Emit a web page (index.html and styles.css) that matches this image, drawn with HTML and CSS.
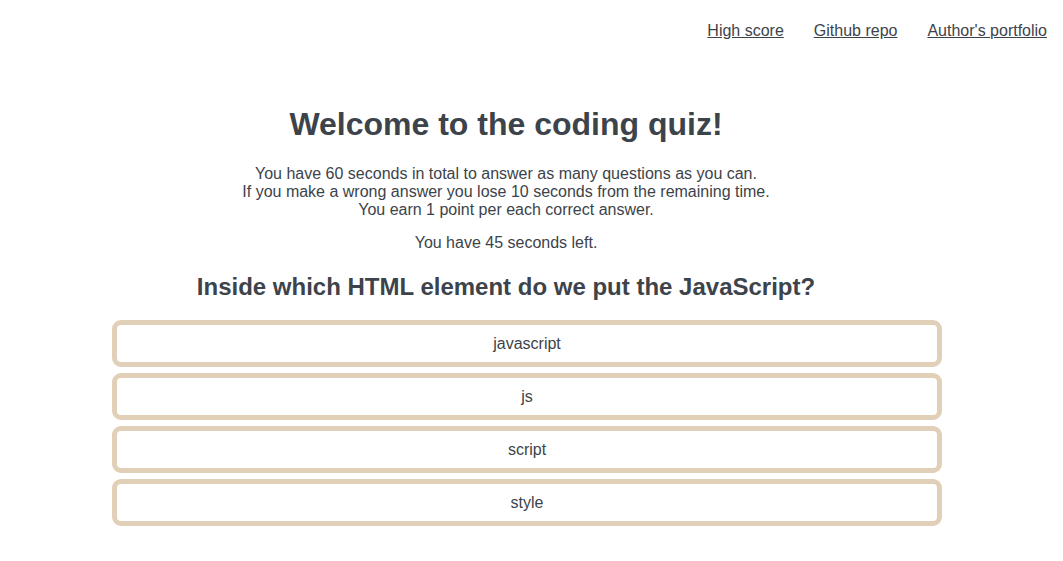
FILE: index.html
```html
<!DOCTYPE html>
<html lang="en">
<head>
<meta charset="utf-8">
<title>Coding quiz</title>
<link rel="stylesheet" href="styles.css">
</head>
<body>
<header class="top-nav">
  <a href="#" class="nav-link">High score</a>
  <a href="#" class="nav-link">Github repo</a>
  <a href="#" class="nav-link">Author's portfolio</a>
</header>
<main class="quiz">
  <section class="intro">
    <h1 class="title">Welcome to the coding quiz!</h1>
    <p class="rules">You have 60 seconds in total to answer as many questions as you can.<br>If you make a wrong answer you lose 10 seconds from the remaining time.<br>You earn 1 point per each correct answer.</p>
    <p class="timer">You have 45 seconds left.</p>
    <h2 class="question">Inside which HTML element do we put the JavaScript?</h2>
  </section>
  <div class="answers">
    <button class="answer">javascript</button>
    <button class="answer">js</button>
    <button class="answer">script</button>
    <button class="answer">style</button>
  </div>
</main>
</body>
</html>
```

FILE: styles.css
```css
html, body {
  margin: 0;
  padding: 0;
  background: #ffffff;
}
body {
  font-family: "Liberation Sans", Arial, sans-serif;
  color: #3d434a;
  font-size: 16px;
}
.top-nav {
  display: flex;
  justify-content: flex-end;
  gap: 30px;
  padding: 22px 16px 0 0;
  line-height: 18px;
}
.nav-link {
  color: #3d434a;
  text-decoration: underline;
}
.quiz {
  padding-top: 64px;
}
.intro {
  text-align: center;
  margin-right: 51px;
}
.title {
  font-size: 32px;
  font-weight: bold;
  margin: 2px 0 22px 0;
  line-height: 37px;
}
.rules {
  margin: 0;
  line-height: 18px;
}
.timer {
  margin: 15px 0 0 0;
  line-height: 18px;
}
.question {
  font-size: 24px;
  font-weight: bold;
  margin: 21px 0 19px 0;
  line-height: 28px;
}
.answers {
  display: flex;
  flex-direction: column;
  gap: 6px;
  margin-left: 112px;
  width: 830px;
}
.answer {
  font-family: "Liberation Sans", Arial, sans-serif;
  font-size: 16px;
  color: #3d434a;
  background: #ffffff;
  border: 5px solid #e1cfb7;
  border-radius: 9px;
  height: 47px;
  padding: 0;
  text-align: center;
}
```
